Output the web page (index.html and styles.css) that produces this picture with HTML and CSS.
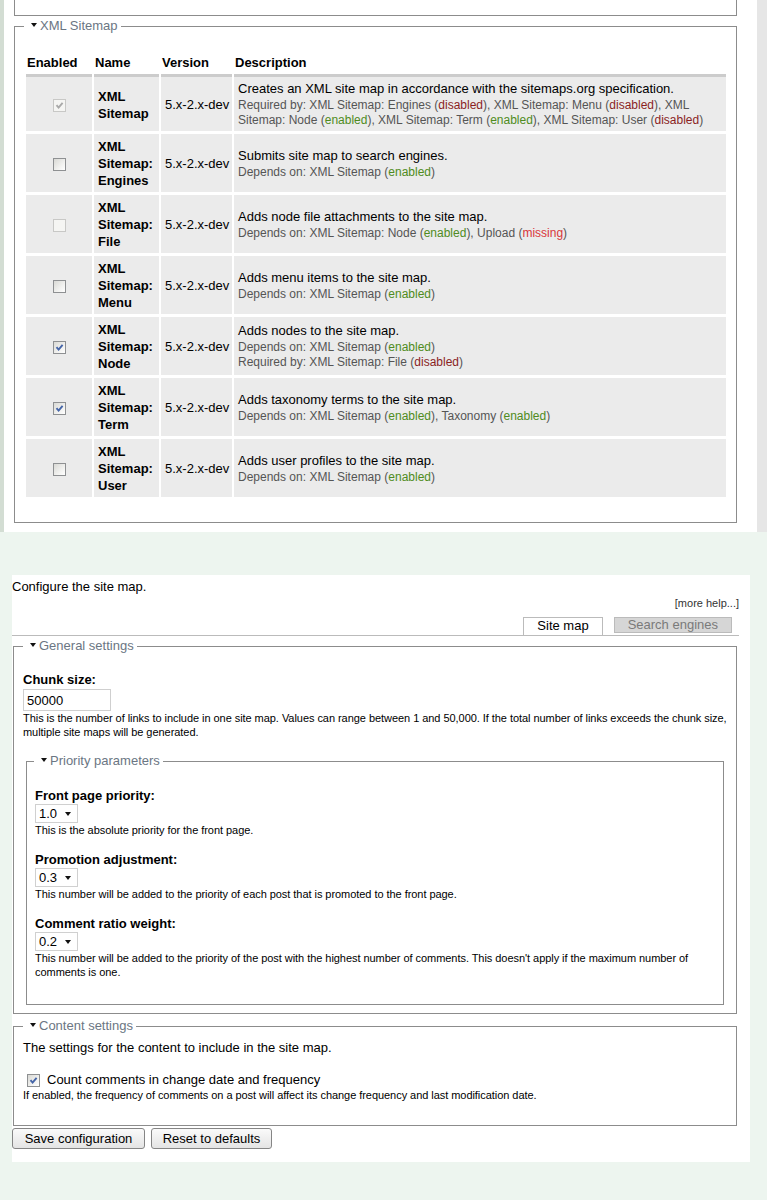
FILE: index.html
```html
<!DOCTYPE html>
<html>
<head>
  <title>XML Sitemap</title>
  <link rel="stylesheet" href="styles.css">
</head>
<body>

<div class="shot-top">
  <div class="fieldset-tail"></div>

  <fieldset class="modules">
    <legend><span class="arrow"></span>XML Sitemap</legend>
    <table class="package">
      <thead>
        <tr>
          <th class="col-enabled">Enabled</th>
          <th class="col-name">Name</th>
          <th class="col-version">Version</th>
          <th class="col-desc">Description</th>
        </tr>
      </thead>
      <tbody>
        <tr>
          <td class="checkbox"><span class="cb checked disabled"><svg width="11" height="11" viewBox="0 0 11 11"><path d="M2.5 5.2 L4.6 7.6 L8.6 2.8"/></svg></span></td>
          <td class="name">XML Sitemap</td>
          <td class="version">5.x-2.x-dev</td>
          <td class="desc">Creates an XML site map in accordance with the sitemaps.org specification.
            <div class="deps">Required by: XML Sitemap: Engines (<span class="off">disabled</span>), XML Sitemap: Menu (<span class="off">disabled</span>), XML Sitemap: Node (<span class="on">enabled</span>), XML Sitemap: Term (<span class="on">enabled</span>), XML Sitemap: User (<span class="off">disabled</span>)</div>
          </td>
        </tr>
        <tr>
          <td class="checkbox"><span class="cb"></span></td>
          <td class="name">XML Sitemap: Engines</td>
          <td class="version">5.x-2.x-dev</td>
          <td class="desc">Submits site map to search engines.
            <div class="deps">Depends on: XML Sitemap (<span class="on">enabled</span>)</div>
          </td>
        </tr>
        <tr>
          <td class="checkbox"><span class="cb disabled"></span></td>
          <td class="name">XML Sitemap: File</td>
          <td class="version">5.x-2.x-dev</td>
          <td class="desc">Adds node file attachments to the site map.
            <div class="deps">Depends on: XML Sitemap: Node (<span class="on">enabled</span>), Upload (<span class="missing">missing</span>)</div>
          </td>
        </tr>
        <tr>
          <td class="checkbox"><span class="cb"></span></td>
          <td class="name">XML Sitemap: Menu</td>
          <td class="version">5.x-2.x-dev</td>
          <td class="desc">Adds menu items to the site map.
            <div class="deps">Depends on: XML Sitemap (<span class="on">enabled</span>)</div>
          </td>
        </tr>
        <tr>
          <td class="checkbox"><span class="cb checked"><svg width="11" height="11" viewBox="0 0 11 11"><path d="M2.5 5.2 L4.6 7.6 L8.6 2.8"/></svg></span></td>
          <td class="name">XML Sitemap: Node</td>
          <td class="version">5.x-2.x-dev</td>
          <td class="desc">Adds nodes to the site map.
            <div class="deps">Depends on: XML Sitemap (<span class="on">enabled</span>)<br>Required by: XML Sitemap: File (<span class="off">disabled</span>)</div>
          </td>
        </tr>
        <tr>
          <td class="checkbox"><span class="cb checked"><svg width="11" height="11" viewBox="0 0 11 11"><path d="M2.5 5.2 L4.6 7.6 L8.6 2.8"/></svg></span></td>
          <td class="name">XML Sitemap: Term</td>
          <td class="version">5.x-2.x-dev</td>
          <td class="desc">Adds taxonomy terms to the site map.
            <div class="deps">Depends on: XML Sitemap (<span class="on">enabled</span>), Taxonomy (<span class="on">enabled</span>)</div>
          </td>
        </tr>
        <tr>
          <td class="checkbox"><span class="cb"></span></td>
          <td class="name">XML Sitemap: User</td>
          <td class="version">5.x-2.x-dev</td>
          <td class="desc">Adds user profiles to the site map.
            <div class="deps">Depends on: XML Sitemap (<span class="on">enabled</span>)</div>
          </td>
        </tr>
      </tbody>
    </table>
  </fieldset>
</div>

<div class="shot-bottom">
  <p class="intro">Configure the site map.</p>
  <div class="more-help">[more help...]</div>

  <ul class="tabs">
    <li class="tab active">Site map</li>
    <li class="tab">Search engines</li>
  </ul>

  <fieldset class="general">
    <legend><span class="arrow"></span>General settings</legend>
    <div class="form-item">
      <label>Chunk size:</label>
      <input type="text" class="form-text" value="50000">
      <div class="description">This is the number of links to include in one site map. Values can range between 1 and 50,000. If the total number of links exceeds the chunk size, multiple site maps will be generated.</div>
    </div>

    <fieldset class="priority">
      <legend><span class="arrow"></span>Priority parameters</legend>
      <div class="form-item">
        <label>Front page priority:</label>
        <span class="select">1.0<span class="caret"></span></span>
        <div class="description">This is the absolute priority for the front page.</div>
      </div>
      <div class="form-item">
        <label>Promotion adjustment:</label>
        <span class="select">0.3<span class="caret"></span></span>
        <div class="description">This number will be added to the priority of each post that is promoted to the front page.</div>
      </div>
      <div class="form-item">
        <label>Comment ratio weight:</label>
        <span class="select">0.2<span class="caret"></span></span>
        <div class="description">This number will be added to the priority of the post with the highest number of comments. This doesn't apply if the maximum number of comments is one.</div>
      </div>
    </fieldset>
  </fieldset>

  <fieldset class="content">
    <legend><span class="arrow"></span>Content settings</legend>
    <p class="intro">The settings for the content to include in the site map.</p>
    <div class="form-item">
      <div class="check-row">
        <span class="cb checked"><svg width="11" height="11" viewBox="0 0 11 11"><path d="M2.5 5.2 L4.6 7.6 L8.6 2.8"/></svg></span>
        Count comments in change date and frequency
      </div>
      <div class="description">If enabled, the frequency of comments on a post will affect its change frequency and last modification date.</div>
    </div>
  </fieldset>

  <div class="buttons">
    <input type="submit" class="form-submit save" value="Save configuration">
    <input type="submit" class="form-submit reset" value="Reset to defaults">
  </div>
</div>

</body>
</html>
```

FILE: styles.css
```css
body {
  margin: 0;
  font-family: "Liberation Sans", Arial, sans-serif;
  font-size: 13px;
  color: #000;
  background-color: #edf5ef;
}

/* top screenshot */
.shot-top {
  height: 532px;
  box-sizing: border-box;
  background-color: #fff;
  border-left: 4px solid #d3ddd3;
  border-right: 10px solid #e6e6e6;
  overflow: hidden;
}

.fieldset-tail {
  margin-left: 10px;
  width: 721px;
  height: 15px;
  border: 1px solid #8c8c8c;
  border-top: 0;
}

fieldset {
  border: 1px solid #8c8c8c;
  min-width: 0;
}

legend {
  font-size: 13px;
  line-height: 16px;
  color: #6b7683;
  padding: 0 3px 0 7px;
}

legend .arrow {
  display: inline-block;
  width: 0;
  height: 0;
  border-top: 4px solid #111;
  border-left: 3px solid transparent;
  border-right: 3px solid transparent;
  vertical-align: 3px;
  margin-right: 3px;
}

.modules {
  margin: 2px 0 0 10px;
  width: 723px;
  box-sizing: border-box;
  padding: 18px 10px 25px 11px;
}

.modules legend {
  margin-left: -2px;
}

.package {
  width: 704px;
  margin: 0 -2px;
  border-collapse: separate;
  border-spacing: 2px 0;
  table-layout: fixed;
}

.package th {
  text-align: left;
  font-weight: bold;
  line-height: 16px;
  padding: 3px 1px 3px;
  border-bottom: 3px solid #ccc;
}

.col-enabled { width: 64px; }
.col-name { width: 63px; }
.col-version { width: 69px; }
.col-desc { width: 490px; }

.package td {
  background-color: #ebebeb;
  border-top: 3px solid #fff;
  padding: 4px 2px 3px 4px;
  vertical-align: middle;
}

.package tbody tr:first-child td {
  border-top: 0;
}

.package td.checkbox {
  text-align: center;
  padding-left: 0;
  padding-right: 0;
}

.package td.name {
  font-weight: bold;
  line-height: 17px;
}

.package td.version {
  white-space: nowrap;
}

.package td.desc {
  line-height: 16px;
  padding-right: 4px;
}

.deps {
  margin-top: 1px;
  font-size: 12px;
  line-height: 15px;
  color: #555;
}

.deps .on { color: #4f8b22; }
.deps .off { color: #8a1f1f; }
.deps .missing { color: #d9363a; }

/* checkboxes */
.cb {
  display: inline-block;
  width: 11px;
  height: 11px;
  border: 1px solid #8e9092;
  background: linear-gradient(135deg, #d9d9d5 0%, #f1f1ef 60%, #fff 100%);
  vertical-align: middle;
}

.cb svg {
  display: block;
}

.cb path {
  fill: none;
  stroke: #4565a8;
  stroke-width: 1.9;
}

.cb.disabled {
  border-color: #c8c8c6;
  background: #f5f5f3;
}

.cb.disabled path {
  stroke: #a9a9a9;
}

/* bottom screenshot */
.shot-bottom {
  margin: 43px 0 0 12px;
  width: 738px;
  background-color: #fff;
  padding: 4px 0 13px;
}

.intro {
  margin: 0;
  line-height: 16px;
}

.more-help {
  text-align: right;
  font-size: 11px;
  line-height: 14px;
  margin: 1px 11px 0 0;
  color: #333;
}

.tabs {
  list-style: none;
  margin: 7px 11px 0 0;
  padding: 0 7px 0 0;
  display: flex;
  justify-content: flex-end;
  align-items: flex-start;
  border-bottom: 1px solid #bbb;
}

.tab {
  margin-left: 11px;
  padding: 0 13px;
  line-height: 14px;
  border: 1px solid #bbb;
  background-color: #d6d6d6;
  color: #7a7a7a;
}

.tab.active {
  margin-left: 0;
  line-height: 16px;
  padding-bottom: 1px;
  border-bottom: 0;
  background-color: #fff;
  color: #000;
}

.general {
  margin: 2px 13px 0 1px;
  padding: 18px 9px 8px;
}

.priority {
  margin: 14px 3px 0;
  padding: 19px 8px 25px;
}

.priority legend {
  margin-left: -1px;
}

.content {
  margin: 4px 13px 0 1px;
  padding: 6px 9px 23px;
}

.form-item + .form-item {
  margin-top: 15px;
}

.content .form-item {
  margin-top: 16px;
}

.form-item label {
  display: block;
  font-weight: bold;
  line-height: 16px;
}

.form-text {
  display: block;
  margin: 1px 0 0;
  width: 88px;
  height: 22px;
  box-sizing: border-box;
  border: 1px solid #cfcfcf;
  padding: 0 3px;
  font-family: "Liberation Sans", Arial, sans-serif;
  font-size: 13px;
  color: #000;
}

.description {
  font-size: 11px;
  line-height: 14px;
  letter-spacing: -0.05px;
}

.select {
  display: flex;
  align-items: center;
  width: 43px;
  height: 19px;
  box-sizing: border-box;
  border: 1px solid #d0d0d0;
  padding-left: 3px;
  line-height: 17px;
}

.caret {
  width: 0;
  height: 0;
  margin-left: auto;
  margin-right: 6px;
  border-top: 4px solid #111;
  border-left: 3px solid transparent;
  border-right: 3px solid transparent;
}

.check-row {
  display: flex;
  align-items: center;
  line-height: 16px;
}

.check-row .cb {
  margin: 0 7px 0 4px;
}

.buttons {
  display: flex;
  gap: 6px;
  margin-top: 2px;
}

.form-submit {
  height: 21px;
  padding: 0;
  border: 1px solid #858585;
  border-radius: 3px;
  background: linear-gradient(#fafafa, #e4e4e4);
  font-family: "Liberation Sans", Arial, sans-serif;
  font-size: 13px;
  color: #000;
}

.form-submit.save { width: 133px; }
.form-submit.reset { width: 121px; }
```
